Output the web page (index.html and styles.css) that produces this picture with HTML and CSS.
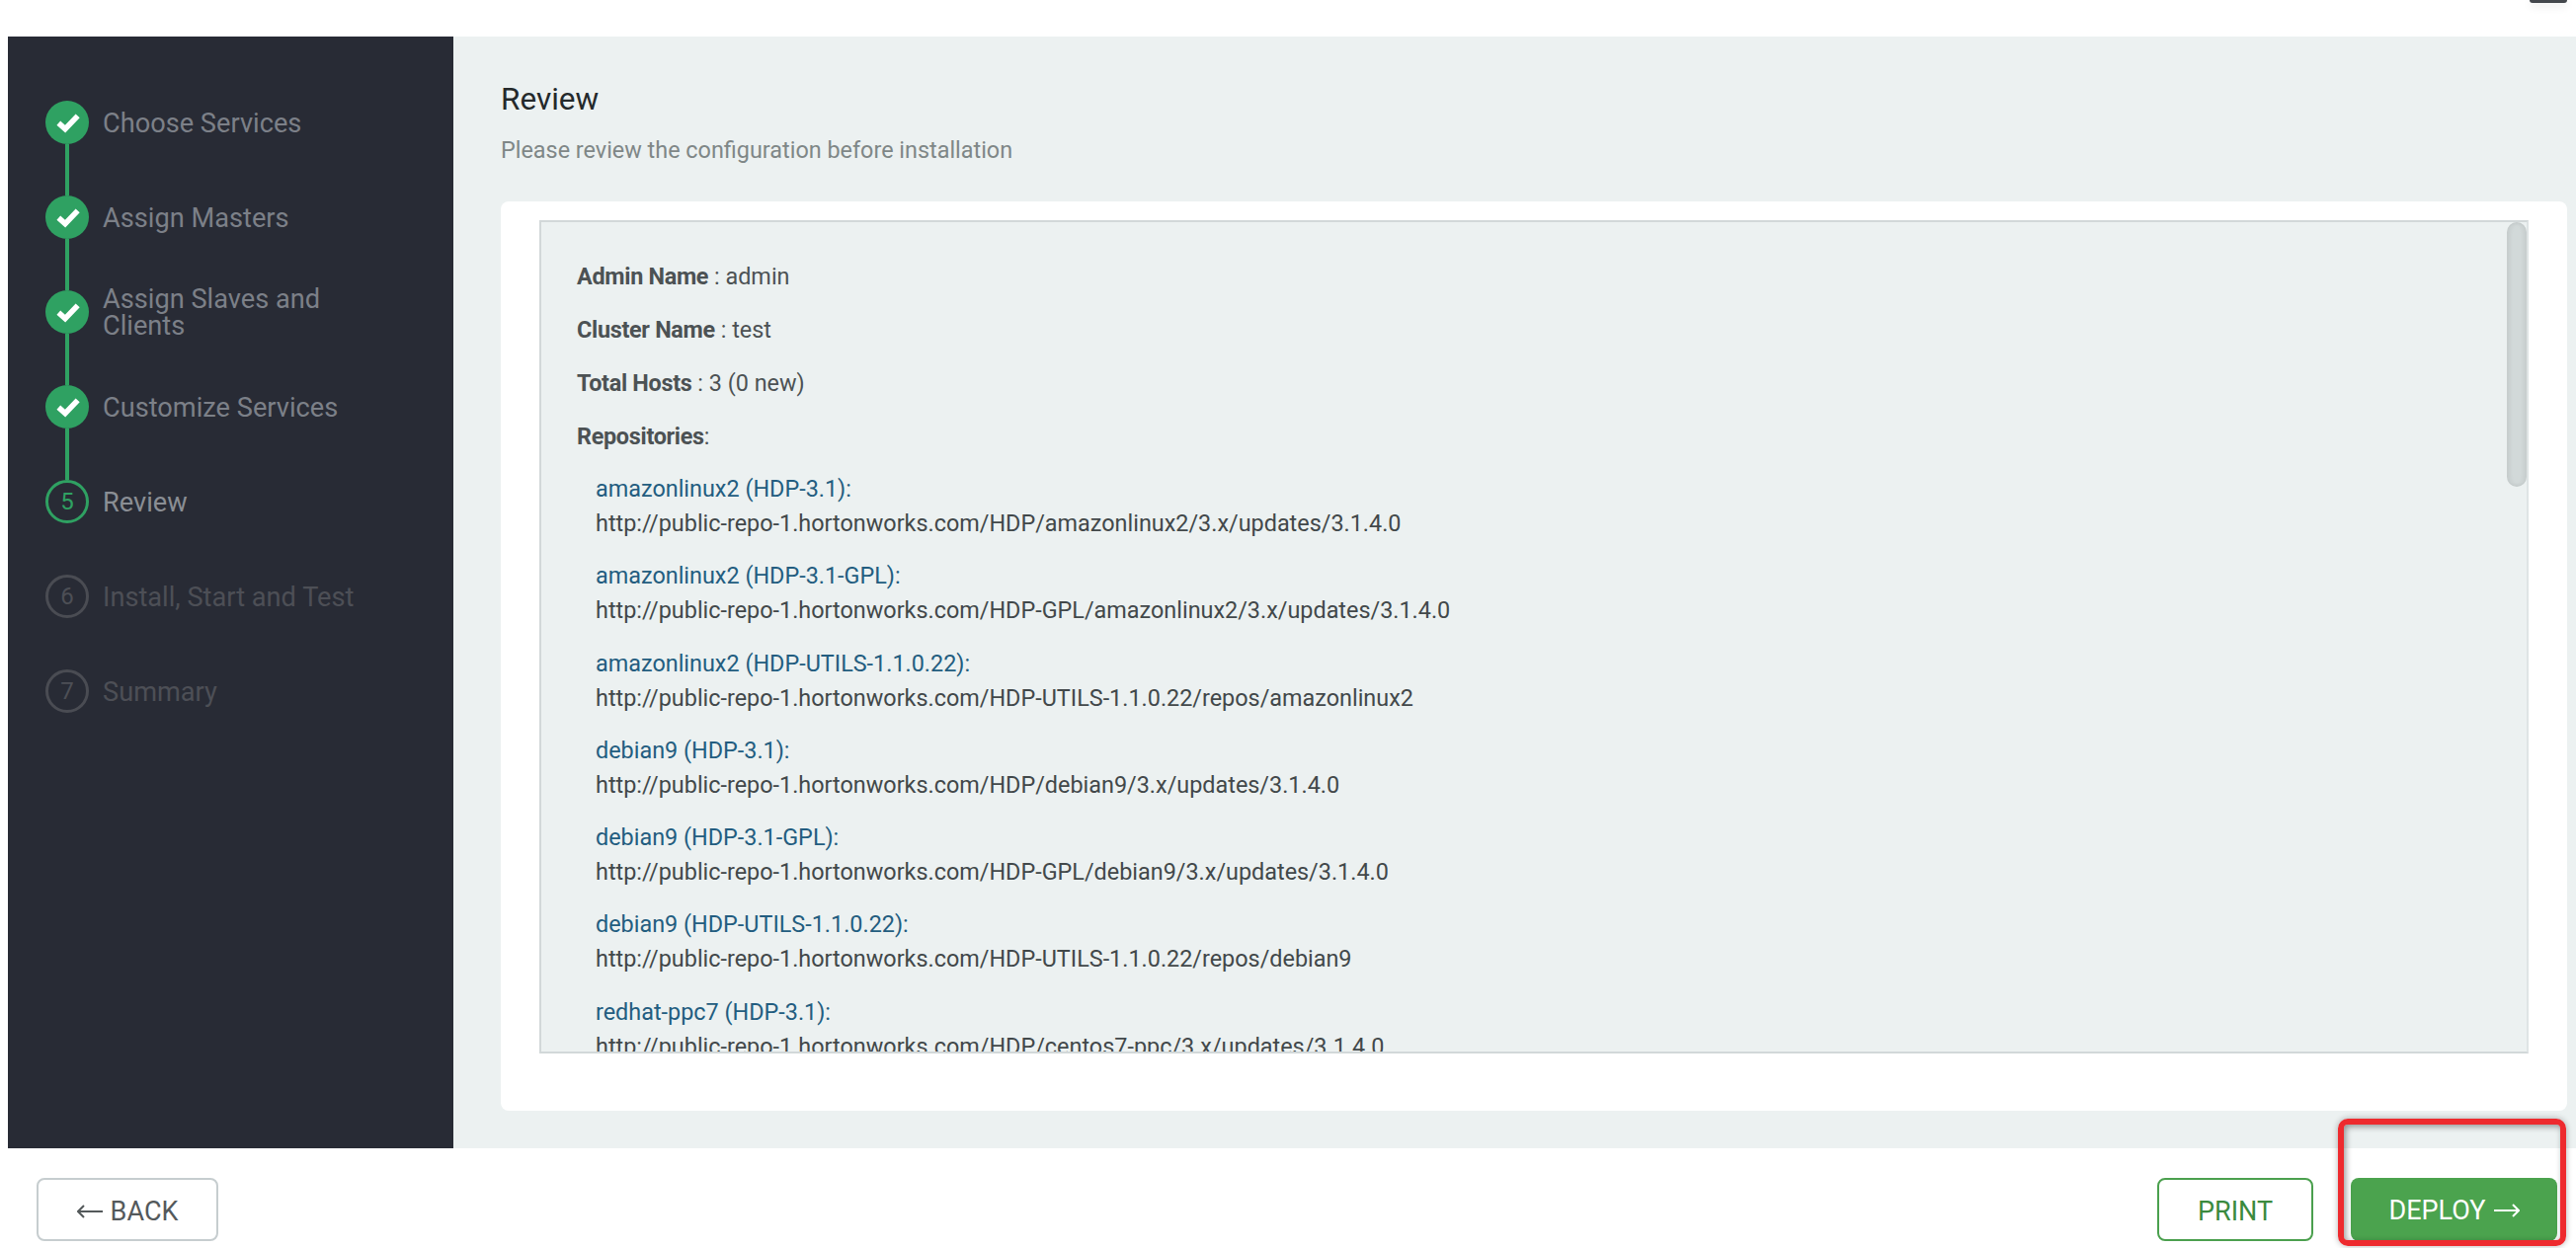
FILE: index.html
```html
<!DOCTYPE html>
<html lang="en">
<head>
<meta charset="utf-8">
<title>Review</title>
<link rel="stylesheet" href="styles.css">
</head>
<body>
<div class="page">
  <header class="topbar"><span class="top-tab"></span></header>
  <div class="workspace">
    <nav class="sidebar">
      <ol class="steps">
        <li class="step done"><span class="dot"><svg class="check" viewBox="0 0 24 24"><path d="M5.5 12.5l5 4.5L20 7" /></svg></span><span class="label">Choose Services</span></li>
        <li class="step done"><span class="dot"><svg class="check" viewBox="0 0 24 24"><path d="M5.5 12.5l5 4.5L20 7" /></svg></span><span class="label">Assign Masters</span></li>
        <li class="step done"><span class="dot"><svg class="check" viewBox="0 0 24 24"><path d="M5.5 12.5l5 4.5L20 7" /></svg></span><span class="label">Assign Slaves and Clients</span></li>
        <li class="step done"><span class="dot"><svg class="check" viewBox="0 0 24 24"><path d="M5.5 12.5l5 4.5L20 7" /></svg></span><span class="label">Customize Services</span></li>
        <li class="step active"><span class="dot">5</span><span class="label">Review</span></li>
        <li class="step todo"><span class="dot">6</span><span class="label">Install, Start and Test</span></li>
        <li class="step todo"><span class="dot">7</span><span class="label">Summary</span></li>
      </ol>
    </nav>
    <main class="content">
      <h1 class="title">Review</h1>
      <p class="subtitle">Please review the configuration before installation</p>
      <section class="card">
        <div class="review-box">
          <div class="scroll-thumb"></div>
          <p class="fact"><b>Admin Name</b> : admin</p>
          <p class="fact"><b>Cluster Name</b> : test</p>
          <p class="fact"><b>Total Hosts</b> : 3 (0 new)</p>
          <p class="fact"><b>Repositories</b>:</p>
          <div class="repos">
            <div class="repo"><div class="repo-name">amazonlinux2 (HDP-3.1):</div><div class="repo-url">http://public-repo-1.hortonworks.com/HDP/amazonlinux2/3.x/updates/3.1.4.0</div></div>
            <div class="repo"><div class="repo-name">amazonlinux2 (HDP-3.1-GPL):</div><div class="repo-url">http://public-repo-1.hortonworks.com/HDP-GPL/amazonlinux2/3.x/updates/3.1.4.0</div></div>
            <div class="repo"><div class="repo-name">amazonlinux2 (HDP-UTILS-1.1.0.22):</div><div class="repo-url">http://public-repo-1.hortonworks.com/HDP-UTILS-1.1.0.22/repos/amazonlinux2</div></div>
            <div class="repo"><div class="repo-name">debian9 (HDP-3.1):</div><div class="repo-url">http://public-repo-1.hortonworks.com/HDP/debian9/3.x/updates/3.1.4.0</div></div>
            <div class="repo"><div class="repo-name">debian9 (HDP-3.1-GPL):</div><div class="repo-url">http://public-repo-1.hortonworks.com/HDP-GPL/debian9/3.x/updates/3.1.4.0</div></div>
            <div class="repo"><div class="repo-name">debian9 (HDP-UTILS-1.1.0.22):</div><div class="repo-url">http://public-repo-1.hortonworks.com/HDP-UTILS-1.1.0.22/repos/debian9</div></div>
            <div class="repo"><div class="repo-name">redhat-ppc7 (HDP-3.1):</div><div class="repo-url">http://public-repo-1.hortonworks.com/HDP/centos7-ppc/3.x/updates/3.1.4.0</div></div>
          </div>
        </div>
      </section>
    </main>
  </div>
  <footer class="footer">
    <button class="btn btn-back"><svg class="arrow" viewBox="0 0 26 14"><path d="M26 7H1M7 1L1 7l6 6" /></svg>BACK</button>
    <div class="footer-right">
      <button class="btn btn-print">PRINT</button>
      <button class="btn btn-deploy">DEPLOY<svg class="arrow" viewBox="0 0 26 14"><path d="M0 7h25M19 1l6 6-6 6" /></svg></button>
    </div>
  </footer>
  <div class="highlight"></div>
</div>
</body>
</html>
```
FILE: styles.css
```css
* { box-sizing: border-box; }
html, body { margin: 0; padding: 0; }
body { background: #fff; font-family: Roboto, "Liberation Sans", sans-serif; color: #4c5254; }
.page { position: relative; width: 2608px; height: 1264px; overflow: hidden; display: flex; flex-direction: column; }

.topbar { position: relative; height: 37px; flex: none; background: #fff; }
.top-tab { position: absolute; top: 0; right: 9px; width: 38px; height: 3px; background: #43474c; border-radius: 0 0 8px 8px; box-shadow: 0 3px 8px rgba(0,0,0,.14); }

.workspace { display: flex; height: 1126px; flex: none; padding-left: 8px; }
.sidebar { width: 451px; flex: none; background: #282b35; padding: 65px 0 0 38px; }
.steps { list-style: none; margin: 0; padding: 0; }
.step { position: relative; display: flex; align-items: center; height: 44px; margin-bottom: 52px; gap: 15px; }
.step.done::after { content: ""; position: absolute; left: 20px; top: 44px; width: 4px; height: 52px; background: #2fa162; }
.dot { flex: none; width: 44px; height: 44px; border-radius: 50%; display: flex; align-items: center; justify-content: center; font-size: 24px; }
.done .dot { background: #2fa162; }
.active .dot { border: 3px solid #2fa162; color: #2fa162; }
.todo .dot { border: 3px solid #4a4c53; color: #4d4f56; }
.check { width: 32px; height: 32px; fill: none; stroke: #fff; stroke-width: 4.2; }
.label { width: 300px; margin-left: -1px; padding-top: 2px; font-size: 27.2px; line-height: 27px; color: #7c8088; }
.active .label { color: #8a8e94; }
.todo .label { color: #4d4f56; }

.content { flex: 1; background: #ecf1f1; padding: 0 9px 38px 48px; display: flex; flex-direction: column; min-width: 0; }
.title { margin: 46px 0 0; font-size: 31.5px; line-height: 36px; font-weight: 400; color: #24292b; }
.subtitle { margin: 17px 0 0; font-size: 23.4px; line-height: 32px; color: #7f8787; }
.card { margin-top: 36px; flex: 1; min-height: 0; background: #fff; border-radius: 8px; padding: 19px 39px 58px 39px; }
.review-box { position: relative; height: 100%; background: #ecf1f1; border: 2px solid #d2d8d9; border-right-color: #dfe4e5; overflow: hidden; padding: 28px 36px 0; }
.scroll-thumb { position: absolute; top: 0; right: 0; width: 20px; height: 268px; background: #d2d9d9; border-radius: 10px; box-shadow: inset -3px 0 4px rgba(0,0,0,.06), inset 3px 0 4px rgba(0,0,0,.06); }
.fact { margin: 0; font-size: 23.4px; line-height: 54px; height: 54px; white-space: nowrap; }
.fact b { font-weight: 700; letter-spacing: -.3px; }
.repos { padding-left: 19px; margin-top: 9px; }
.repo { height: 88.3px; font-size: 23.4px; line-height: 35px; white-space: nowrap; }
.repo-name { color: #235d80; }
.repo-url { color: #42484a; }

.footer { flex: none; height: 101px; display: flex; justify-content: space-between; align-items: flex-start; padding: 30px 19px 0 37px; background: #fff; }
.footer-right { display: flex; gap: 38px; }
.btn { height: 64px; border-radius: 8px; font-family: inherit; font-size: 27px; display: flex; align-items: center; justify-content: center; gap: 8px; padding: 3px 0 0; cursor: pointer; }
.btn-back { width: 184px; background: #fff; border: 2px solid #c6cdcf; color: #54595b; }
.btn-print { width: 158px; background: #fff; border: 2px solid #4ba04e; color: #3b8a3e; }
.btn-deploy { width: 209px; background: #4ba34e; border: none; color: #fff; padding-top: 1px; }
.arrow { width: 26px; height: 14px; fill: none; stroke: currentColor; stroke-width: 2; }

.highlight { position: absolute; left: 2367px; top: 1133px; width: 231px; height: 129px; border: 6px solid #ee2a2e; border-radius: 10px; box-shadow: 0 0 6px rgba(0,0,0,.3), inset 2px 2px 6px rgba(0,0,0,.4); pointer-events: none; }
```
